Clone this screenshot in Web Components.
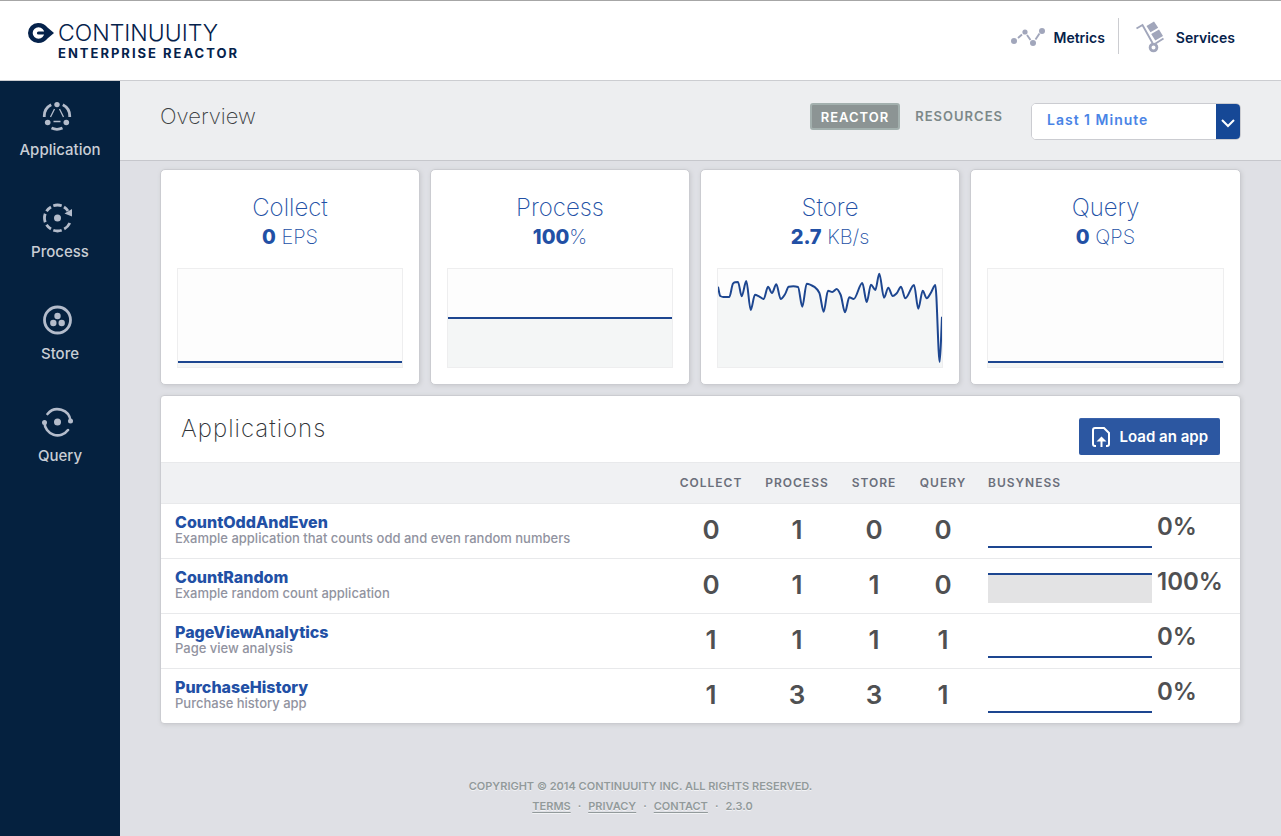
<!DOCTYPE html>
<html lang="en">
<head>
<meta charset="utf-8">
<title>Continuuity Enterprise Reactor</title>
<style>
  html, body { margin: 0; }
  body {
    min-height: 100vh; display: flex; flex-direction: column;
    background: #dfe0e5; color: #4f5052;
    font-family: Inter, "Liberation Sans", sans-serif; font-size: 14px;
  }
  .layout { flex: 1; display: flex; }
  main { flex: 1; min-width: 0; }
  .content { padding: 8px 40px 0; display: grid; gap: 10px; }
  .cards { display: grid; grid-template-columns: 260fr 260fr 260fr 271fr; gap: 10px; }
</style>
</head>
<body>
<reactor-header></reactor-header>
<div class="layout">
  <reactor-sidebar></reactor-sidebar>
  <main>
    <reactor-toolbar><span>Overview</span></reactor-toolbar>
    <div class="content">
      <div class="cards">
        <stat-card level="93"><span slot="title">Collect</span><b slot="value">0</b> EPS</stat-card>
        <stat-card level="49"><span slot="title">Process</span><b slot="value">100</b>%</stat-card>
        <stat-card series="store"><span slot="title">Store</span><b slot="value">2.7</b> KB/s</stat-card>
        <stat-card level="93"><span slot="title">Query</span><b slot="value">0</b> QPS</stat-card>
      </div>
      <app-panel></app-panel>
    </div>
    <reactor-footer></reactor-footer>
  </main>
</div>

<script>
function define(name, html, setup) {
  const template = document.createElement('template');
  template.innerHTML = html;
  customElements.define(name, class extends HTMLElement {
    constructor() {
      super();
      this.attachShadow({ mode: 'open' }).append(template.content.cloneNode(true));
    }
    connectedCallback() { if (setup) setup(this, this.shadowRoot); }
  });
}

/* Smooth line through the points that never overshoots a peak */
function curve(points) {
  const n = points.length, slope = [];
  for (let i = 0; i < n - 1; i++)
    slope.push((points[i + 1][1] - points[i][1]) / (points[i + 1][0] - points[i][0]));
  const m = points.map((p, i) => {
    if (i === 0) return slope[0];
    if (i === n - 1) return slope[n - 2];
    const a = slope[i - 1], b = slope[i];
    return a * b <= 0 ? 0 : 2 * a * b / (a + b);
  });
  let d = 'M' + points[0].join();
  for (let i = 0; i < n - 1; i++) {
    const [x, y] = points[i], [u, v] = points[i + 1], h = (u - x) / 3;
    d += `C${x + h},${y + m[i] * h} ${u - h},${v - m[i + 1] * h} ${u},${v}`;
  }
  return d;
}

const series = {
  store: [[0,17.7],[2.3,27],[5.3,28],[11.3,28],[15,14.7],[17,13.3],[20,13],[23.7,27.3],[28.3,12],[32.7,41],[37,25.7],[41,27.3],[45.7,30],[50,17.7],[54,24],[58.3,15.3],[62.7,30],[67,25.3],[70.7,17.7],[75.3,17.3],[80,18],[84.3,37.7],[88.7,14.7],[97,18.3],[101.3,23.7],[105.7,42.7],[110,21.7],[114.3,23],[118.7,20],[122.7,26],[127,43.3],[131.3,28.3],[135.7,30],[144.3,14],[148.7,33],[153,15.7],[157.3,21],[161.3,4.7],[166,28.7],[170.3,18.7],[174.7,27],[178.7,24.3],[183,17.7],[187.3,29.3],[196,16],[200.3,39.7],[204.7,21.7],[208.7,29.3],[213.3,23],[217.3,16],[221.7,93],[224,47.7]]
};

define('reactor-header', `
  <style>
    :host { display: block; background: #fff; border-top: 1px solid #a6a6a6; border-bottom: 1px solid #cccdd1; color: #05224b; }
    header { height: 79px; display: flex; justify-content: space-between; box-sizing: border-box; padding: 17px 46px 0 28px; }
    .brand { display: flex; gap: 4px; color: inherit; text-decoration: none; padding-top: 4px; }
    .brand svg { margin-top: 1px; }
    .word { display: block; font-size: 23px; line-height: 22px; font-weight: 300; }
    .sub { display: block; font-size: 13px; line-height: 18px; font-weight: 700; letter-spacing: 2px; }
    nav { display: flex; height: 36px; }
    nav a { display: flex; align-items: center; padding-top: 2px; color: inherit; text-decoration: none; font-size: 14px; font-weight: 600; }
    .metrics { gap: 8px; padding-right: 13px; border-right: 1px solid #cccdd1; }
    .services { gap: 11px; padding-left: 17px; }
  </style>
  <header>
    <a class="brand" href="#">
      <svg width="26" height="20" viewBox="0 0 26 20" aria-hidden="true">
        <path d="M10 0c4.500 0 7.500 2 9.500 4.500L26 10l-6.500 5.500C17.500 18 14.500 20 10 20A10 10 0 0 1 10 0z" fill="#05224b"/>
        <circle cx="10.500" cy="10" r="5.800" fill="#fff"/>
        <path d="M10.500 10h9" stroke="#05224b" stroke-width="3.200" stroke-linecap="round"/>
      </svg>
      <span><span class="word">CONTINUUITY</span><span class="sub">ENTERPRISE REACTOR</span></span>
    </a>
    <nav>
      <a class="metrics" href="#metrics">
        <svg width="34" height="20" viewBox="0 0 34 20" aria-hidden="true">
          <g fill="#a1a6bb"><circle cx="3" cy="14" r="3"/><circle cx="14" cy="5" r="2.600"/><circle cx="22" cy="16" r="3"/><circle cx="31" cy="4" r="3"/></g>
          <path d="M7 11l4-3.500M16 8l3.500 5M24.500 12.500l4-6" stroke="#a1a6bb" stroke-width="1.900" fill="none"/>
        </svg>Metrics</a>
      <a class="services" href="#services">
        <svg width="29" height="32" viewBox="0 0 29 32" aria-hidden="true">
          <path d="M0.500 7.500l6-3.500L16.500 22M19.500 22.500l8-5" fill="none" stroke="#a1a6bb" stroke-width="1.900"/>
          <path d="M10.500 5l7.500-4.500 4.200 6.200-7.700 4.500z M15.200 13l7.800-4.500 4 6.500-7.700 4.500z" fill="#a1a6bb"/>
          <circle cx="17.500" cy="26.500" r="3.400" fill="#fff" stroke="#a1a6bb" stroke-width="2.800"/>
        </svg>Services</a>
    </nav>
  </header>`);

define('nav-item', `
  <style>
    :host { display: block; height: 102px; }
    a { display: flex; flex-direction: column; align-items: center; gap: 9px; color: #c9ced5; text-decoration: none; font-size: 15px; line-height: 20px; font-weight: 500; }
    ::slotted(svg) { display: block; }
  </style>
  <a href="#"><slot name="icon"></slot><span><slot></slot></span></a>`);

define('reactor-sidebar', `
  <style>
    :host { display: block; width: 120px; flex: none; background: #05213f; }
    nav { padding-top: 20px; }
  </style>
  <nav>
    <nav-item><svg slot="icon" width="36" height="30" viewBox="0 0 36 30" fill="none" stroke="#b4bccb" aria-hidden="true">
      <path d="M9.200 3.700A13 13 0 0 0 2.300 16M20.800 3.700A13 13 0 0 1 27.700 16M9.500 27A13 13 0 0 0 20.500 27" stroke-width="2.800"/>
      <path d="M12.500 8L8.500 16M17.500 8L21.500 16M11.500 20.500h7" stroke-width="1.300"/>
      <g fill="#b4bccb" stroke="none"><circle cx="15" cy="3.600" r="2.700"/><circle cx="5.700" cy="21.500" r="2.800"/><circle cx="24.300" cy="21.500" r="2.800"/></g>
    </svg>Application</nav-item>
    <nav-item><svg slot="icon" width="36" height="30" viewBox="0 0 36 30" fill="none" stroke="#b4bccb" aria-hidden="true">
      <path d="M11.300 2.700A13 13 0 0 1 19.700 2.700M22 4A13 13 0 0 1 26 8M27.800 20A13 13 0 0 1 22.200 26M19.700 27.300A13 13 0 0 1 11.300 27.300M9 26A13 13 0 0 1 4.500 21.700M3.200 19.200A13 13 0 0 1 3.200 10.800M4.500 8.300A13 13 0 0 1 9 4" stroke-width="2.800"/>
      <path d="M22.500 10.500l7.500-4.500v7.500z" fill="#b4bccb" stroke="none"/>
      <circle cx="15.500" cy="15" r="3.500" fill="#b4bccb" stroke="none"/>
    </svg>Process</nav-item>
    <nav-item><svg slot="icon" width="36" height="30" viewBox="0 0 36 30" fill="#b4bccb" aria-hidden="true">
      <circle cx="15.500" cy="15" r="13" fill="none" stroke="#b4bccb" stroke-width="2.800"/>
      <circle cx="15.500" cy="11" r="3.200"/><circle cx="11.300" cy="18" r="3.200"/><circle cx="19.700" cy="18" r="3.200"/>
    </svg>Store</nav-item>
    <nav-item><svg slot="icon" width="36" height="30" viewBox="0 0 36 30" fill="none" stroke="#b4bccb" aria-hidden="true">
      <path d="M5.500 7A13 13 0 0 1 28.500 14M2.500 15.500A13 13 0 0 0 26 23" stroke-width="2.600" stroke-linecap="round"/>
      <g fill="#b4bccb" stroke="none"><circle cx="15.500" cy="15" r="3.500"/><circle cx="28.500" cy="14" r="2.500"/><circle cx="2.500" cy="15.500" r="2.500"/></g>
    </svg>Query</nav-item>
  </nav>`);

define('reactor-toolbar', `
  <style>
    :host { display: block; background: #edeef0; border-bottom: 1px solid #c6c7cc; }
    div.bar { display: flex; align-items: flex-start; padding: 22px 40px 20px; }
    h1 { margin: 0; flex: 1; font-size: 22px; line-height: 26px; font-weight: 200; color: #3c3f43; }
    button { font: 600 13px/17px Inter, sans-serif; letter-spacing: 1px; border: 0; background: none; color: #7c8889; padding: 5px 14px 5px 15px; height: 27px; cursor: pointer; }
    button.on { background: #8c9494; color: #fff; border: 2px solid #a3b0ae; border-radius: 3px; padding: 4px 9px 2px; }
    label { display: flex; width: 208px; height: 35px; margin-left: 14px; background: #fff; border: 1px solid #cbccd1; border-radius: 5px; overflow: hidden; }
    select { flex: 1; min-width: 0; appearance: none; border: 0; margin: 0; background: #fff; padding: 0 15px 4px; font: 600 14px/20px Inter, sans-serif; letter-spacing: 1px; color: #4a84e6; outline: 0; }
    label svg { background: #164896; flex: none; }
  </style>
  <div class="bar">
    <h1><slot></slot></h1>
    <button class="on">REACTOR</button>
    <button>RESOURCES</button>
    <label><select aria-label="Time range"><option>Last 1 Minute</option></select>
      <svg width="24" height="35" viewBox="0 0 24 35" aria-hidden="true"><path d="M6 16l6 6 6-6" fill="none" stroke="#fff" stroke-width="2"/></svg></label>
  </div>`);

define('stat-card', `
  <style>
    :host { display: block; background: #fff; border: 1px solid #cbccd1; border-radius: 5px; box-shadow: 1px 1px 4px #c9cace; padding: 22px 16px 16px; text-align: center; color: #2250a5; }
    h2 { margin: 0; font-size: 24px; line-height: 32px; font-weight: 200; }
    p { margin: 0 0 18px; font-size: 20px; line-height: 26px; font-weight: 200; }
    ::slotted(b) { font-weight: 800; }
    .chart { height: 98px; border: 1px solid #eeeeef; background: #fdfdfd; }
    svg { display: block; width: 100%; height: 98px; }
    .area { fill: #f4f6f6; }
    .line { fill: none; stroke: #1d4690; stroke-width: 2; stroke-linejoin: round; vector-effect: non-scaling-stroke; }
  </style>
  <h2><slot name="title"></slot></h2>
  <p><slot name="value"></slot><slot></slot></p>
  <div class="chart"><svg viewBox="0 0 224 98" preserveAspectRatio="none" aria-hidden="true"><path class="area"/><path class="line"/></svg></div>`,
  (host, root) => {
    const level = Number(host.getAttribute('level'));
    const d = curve(series[host.getAttribute('series')] || [[0, level], [224, level]]);
    root.querySelector('.line').setAttribute('d', d);
    root.querySelector('.area').setAttribute('d', d + 'V98H0Z');
  });

const apps = [
  ['CountOddAndEven', 'Example application that counts odd and even random numbers', 0, 1, 0, 0, 0],
  ['CountRandom', 'Example random count application', 0, 1, 1, 0, 100],
  ['PageViewAnalytics', 'Page view analysis', 1, 1, 1, 1, 0],
  ['PurchaseHistory', 'Purchase history app', 1, 3, 3, 1, 0]
];

define('app-panel', `
  <style>
    :host { display: block; background: #fff; border: 1px solid #cbccd1; border-radius: 4px; box-shadow: 1px 1px 4px #c9cace; overflow: hidden; }
    .head { display: flex; justify-content: space-between; align-items: flex-start; padding: 22px 20px 7px; }
    h2 { margin: 0; font-size: 24px; line-height: 22px; font-weight: 200; letter-spacing: 1px; color: #303337; }
    .head button { display: flex; align-items: center; gap: 9px; height: 37px; padding: 0 12px; border: 0; border-top: 1px solid #3a62ab; border-radius: 2px; background: #2c57a1; color: #fff; font: 600 15px/18px Inter, sans-serif; }
    table { width: 100%; border-collapse: collapse; table-layout: fixed; }
    .c1 { width: 86px; } .c2 { width: 68px; } .c3 { width: 70px; } .c4 { width: 262px; }
    th { height: 40px; padding: 0; background: #f0f1f3; border: solid #e8e9eb; border-width: 1px 0; font-size: 12px; line-height: 16px; font-weight: 600; letter-spacing: 1px; color: #6b6f7b; }
    th:last-child { text-align: left; padding-left: 10px; }
    tbody tr + tr td { border-top: 1px solid #e8e9eb; }
    td { height: 52px; padding: 0 0 2px; text-align: center; font-size: 26px; line-height: 26px; font-weight: 600; color: #4f5052; }
    td:last-child { height: 54px; padding: 0; }
    td.name { text-align: left; padding-left: 14px; }
    a { display: block; color: #2250a5; text-decoration: none; font-size: 16px; line-height: 16px; font-weight: 800; }
    small { display: block; font-size: 13px; line-height: 16px; font-weight: 500; color: #9193a0; }
    .busy { display: flex; gap: 5px; padding-left: 10px; height: 34px; font-size: 24px; line-height: 26px; }
    .spark { width: 164px; height: 30px; margin-top: 4px; box-sizing: border-box; }
    .spark.low { border-bottom: 2px solid #1d4690; }
    .spark.high { border-top: 2px solid #1d4690; background: #e3e3e4; }
  </style>
  <div class="head">
    <h2>Applications</h2>
    <button><svg width="20" height="22" viewBox="0 0 20 22" fill="none" stroke="#fff" stroke-width="2" aria-hidden="true"><path d="M5 20H4q-2 0-2-2V4q0-2 2-2h9l5 5v11q0 2-2 2h-1M10.500 21V13"/><path d="M5.500 15.500L10.500 10.500l5 5z" fill="#fff" stroke="none"/></svg>Load an app</button>
  </div>
  <table>
    <colgroup><col><col class="c1"><col class="c1"><col class="c2"><col class="c3"><col class="c4"></colgroup>
    <thead><tr><th aria-label="Name"></th><th>COLLECT</th><th>PROCESS</th><th>STORE</th><th>QUERY</th><th>BUSYNESS</th></tr></thead>
    <tbody></tbody>
  </table>`,
  (host, root) => {
    root.querySelector('tbody').innerHTML = apps.map(([name, about, c, p, s, q, busy]) => `
      <tr><td class="name"><a href="#${name}">${name}</a><small>${about}</small></td>
      <td>${c}</td><td>${p}</td><td>${s}</td><td>${q}</td>
      <td><div class="busy"><div class="spark ${busy ? 'high' : 'low'}"></div><span>${busy}%</span></div></td></tr>`).join('');
  });

define('reactor-footer', `
  <style>
    :host { display: block; padding: 52px 120px 20px 0; text-align: center; color: #929a9b; font-size: 11px; line-height: 20px; font-weight: 600; text-shadow: 0 1px 0 #f2f3f5; }
    p { margin: 0; }
    p + p { display: flex; justify-content: center; gap: 7px; padding-left: 4px; }
    a { color: inherit; text-underline-offset: 2px; }
  </style>
  <p>COPYRIGHT © 2014 CONTINUUITY INC. ALL RIGHTS RESERVED.</p>
  <p><a href="#terms">TERMS</a><span>·</span><a href="#privacy">PRIVACY</a><span>·</span><a href="#contact">CONTACT</a><span>·</span><span>2.3.0</span></p>`);
</script>
</body>
</html>
